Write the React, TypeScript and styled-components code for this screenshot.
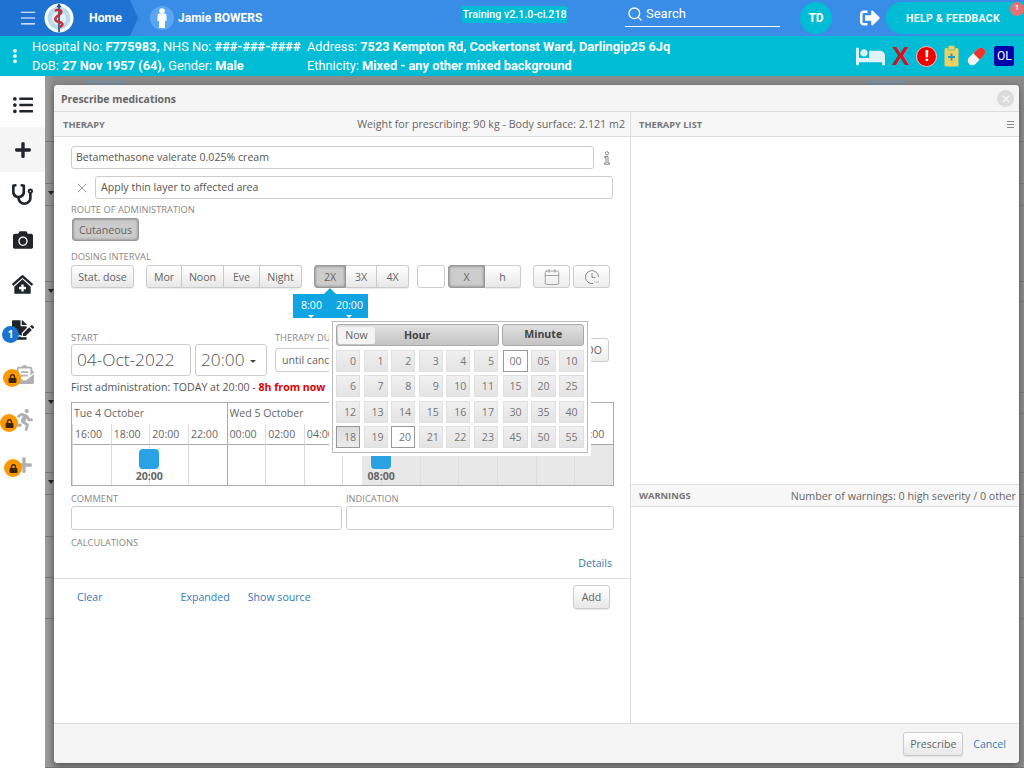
import React from 'react';
import styled, { createGlobalStyle } from 'styled-components';
import {
  FaBed,
  FaCamera,
  FaClinicMedical,
  FaEnvelopeOpenText,
  FaFileSignature,
  FaListUl,
  FaLock,
  FaPlus,
  FaRunning,
  FaSignOutAlt,
  FaStethoscope,
} from 'react-icons/fa';
import { Search, X, Menu, EllipsisVertical, Calendar } from 'lucide-react';

const GlobalStyle = createGlobalStyle`
  html, body { margin: 0; padding: 0; height: 100%; overflow: hidden; }
  body { font-family: "Open Sans", "Liberation Sans", sans-serif; font-size: 11px; color: #555; }
  #root { height: 100%; }
  * { box-sizing: border-box; }
`;

const hours = Array.from({ length: 24 }, (_, i) => i);
const minutes = ['00', '05', '10', '15', '20', '25', '30', '35', '40', '45', '50', '55'];
const ticks = ['16:00', '18:00', '20:00', '22:00', '00:00', '02:00', '04:00', '06:00', '08:00', '10:00', '12:00', '14:00', '16:00', '18:00'];
const backRows = [57, 42, 22, 76, 20, 91, 21, 59, 22, 42, 41, 41, 149];

const Logo = () => (
  <svg width="30" height="30" viewBox="0 0 30 30">
    <circle cx="15" cy="15" r="14.5" fill="#fff" />
    <circle cx="15" cy="15" r="11.5" fill="#b9dcec" />
    <circle cx="15" cy="15" r="7" fill="#e3f1f7" />
    <path d="M15 1v28" stroke="#27496d" strokeWidth="1.6" />
    <path d="M11 8c5-3 9 1 4 4s-5 6 0 7 4 4 0 5" fill="none" stroke="#c8323c" strokeWidth="2.6" />
    <path d="M13 4l2-2 2 2" fill="none" stroke="#27496d" strokeWidth="1.4" />
  </svg>
);

const Person = () => (
  <svg width="12" height="20" viewBox="0 0 12 20">
    <circle cx="6" cy="3" r="2.8" fill="#fff" />
    <path d="M1.5 7a2 2 0 0 1 2-1.5h5A2 2 0 0 1 10.500 7v6H9v7H3v-7H1.500z" fill="#fff" />
  </svg>
);

const Clipboard = () => (
  <svg width="15" height="22" viewBox="0 0 15 22">
    <rect x="0.500" y="3" width="14" height="18.500" rx="1.500" fill="#f0cf63" />
    <rect x="4" y="0.500" width="7" height="4.500" rx="1" fill="#f0cf63" stroke="#00bcd4" strokeWidth="0.600" />
    <path d="M7.500 8.500v7M4 12h7" stroke="#1f9fc4" strokeWidth="2" />
  </svg>
);

const Pill = () => (
  <svg width="21" height="21" viewBox="0 0 21 21">
    <g transform="rotate(-45 10.500 10.500)">
      <rect x="0" y="6" width="21" height="9" rx="4.500" fill="#f4f4f4" />
      <path d="M10.500 6h6a4.500 4.500 0 0 1 0 9h-6z" fill="#e8342c" />
    </g>
  </svg>
);

const HistoryClock = () => (
  <svg width="16" height="16" viewBox="0 0 16 16" fill="none" stroke="#888" strokeWidth="1">
    <path d="M9 14.500A6.500 6.500 0 1 1 14.500 8" />
    <path d="M8 4v4.500h3.500" />
    <path d="M10.500 13h.8M12.500 13h.8M14.200 13h.8" />
  </svg>
);

const InfoGlyph = () => (
  <svg width="8" height="14" viewBox="0 0 8 14" fill="none" stroke="#888" strokeWidth="1">
    <circle cx="4" cy="2.300" r="1.600" />
    <path d="M1.500 5.500h3.500v6.500h1.500v1.200H1.500V12H3V6.700H1.500z" />
  </svg>
);

const App: React.FC = () => (
  <Page>
    <GlobalStyle />
    <TopBar>
      <HomeCrumb>
        <MenuButton>
          <Menu size={20} strokeWidth={1.3} />
        </MenuButton>
        <LogoSlot>
          <Logo />
        </LogoSlot>
        <HomeLabel>Home</HomeLabel>
      </HomeCrumb>
      <PatientAvatar>
        <Person />
      </PatientAvatar>
      <PatientName>Jamie BOWERS</PatientName>
      <VersionTag>Training v2.1.0-ci.218</VersionTag>
      <SearchBox>
        <Search size={16} strokeWidth={2} />
        <span>Search</span>
      </SearchBox>
      <UserCircle>TD</UserCircle>
      <ExitSlot>
        <FaSignOutAlt size={20} />
      </ExitSlot>
      <HelpPill>
        HELP &amp; FEEDBACK
        <HelpBadge>1</HelpBadge>
      </HelpPill>
    </TopBar>

    <InfoBar>
      <DotsSlot>
        <EllipsisVertical size={18} strokeWidth={3} />
      </DotsSlot>
      <InfoColumn $width={275}>
        <div>
          Hospital No: <b>F775983,</b> NHS No: <b>###-###-####</b>
        </div>
        <div>
          DoB: <b>27 Nov 1957 (64),</b> Gender: <b>Male</b>
        </div>
      </InfoColumn>
      <InfoColumn $width={520}>
        <div>
          Address: <b>7523 Kempton Rd, Cockertonst Ward, Darlingip25 6Jq</b>
        </div>
        <div>
          Ethnicity: <b>Mixed - any other mixed background</b>
        </div>
      </InfoColumn>
      <StatusIcons>
        <FaBed size={29} color="#dff3f8" />
        <RedCross>X</RedCross>
        <AlertDot>!</AlertDot>
        <Clipboard />
        <Pill />
        <OlBox>OL</OlBox>
      </StatusIcons>
    </InfoBar>

    <Main>
      <SideNav>
        <NavItem>
          <FaListUl size={20} />
        </NavItem>
        <NavItem $active>
          <FaPlus size={18} />
        </NavItem>
        <NavItem>
          <FaStethoscope size={21} />
        </NavItem>
        <NavItem>
          <FaCamera size={20} />
        </NavItem>
        <NavItem>
          <FaClinicMedical size={21} />
        </NavItem>
        <NavItem>
          <FaFileSignature size={22} />
          <CountBadge>1</CountBadge>
        </NavItem>
        <NavItem $locked>
          <FaEnvelopeOpenText size={19} />
          <LockBadge $left={3}>
            <FaLock size={9} />
          </LockBadge>
        </NavItem>
        <NavItem $locked>
          <FaRunning size={22} />
          <LockBadge $left={0}>
            <FaLock size={9} />
          </LockBadge>
        </NavItem>
        <NavItem $locked>
          <FaPlus size={18} />
          <LockBadge $left={4}>
            <FaLock size={9} />
          </LockBadge>
        </NavItem>
      </SideNav>

      <Backdrop>
        <BackTabs>
          <BackTab />
          <BackTab />
        </BackTabs>
        {backRows.map((h, i) => (
          <BackRow key={i} style={{ height: h }} $caret={i === 1 || i === 3 || i === 5 || i === 7} />
        ))}
      </Backdrop>

      <Modal>
        <ModalHeader>
          Prescribe medications
          <CloseCircle>
            <X size={12} strokeWidth={3} />
          </CloseCircle>
        </ModalHeader>

        <ModalBody>
          <LeftPane>
            <PaneHeader>
              <PaneTitle>THERAPY</PaneTitle>
              <span>Weight for prescribing: 90 kg - Body surface: 2.121 m2</span>
            </PaneHeader>
            <Form>
              <FieldRow>
                <TextField $width={523}>Betamethasone valerate 0.025% cream</TextField>
                <InfoSlot>
                  <InfoGlyph />
                </InfoSlot>
              </FieldRow>
              <FieldRow $top={7}>
                <ClearSlot>
                  <X size={16} strokeWidth={1.1} />
                </ClearSlot>
                <TextField $width={518} $indent={5}>
                  Apply thin layer to affected area
                </TextField>
              </FieldRow>

              <FieldLabel $top={5}>ROUTE OF ADMINISTRATION</FieldLabel>
              <CutaneousRow>
                <Btn $active $width={67} $left={1}>
                  Cutaneous
                </Btn>
              </CutaneousRow>

              <FieldLabel $top={10}>DOSING INTERVAL</FieldLabel>
              <DoseRow>
                <Btn $width={63}>Stat. dose</Btn>
                <BtnGroup $left={12}>
                  <Btn $width={36}>Mor</Btn>
                  <Btn $width={42}>Noon</Btn>
                  <Btn $width={36}>Eve</Btn>
                  <Btn $width={42}>Night</Btn>
                </BtnGroup>
                <BtnGroup $left={12}>
                  <Btn $active $width={32}>
                    2X
                  </Btn>
                  <Btn $width={31}>3X</Btn>
                  <Btn $width={32}>4X</Btn>
                </BtnGroup>
                <BlankField />
                <BtnGroup $left={3}>
                  <Btn $active $width={37}>
                    X
                  </Btn>
                  <Btn $width={36}>h</Btn>
                </BtnGroup>
                <IconBtn $left={12}>
                  <Calendar size={18} strokeWidth={1} color="#888" />
                </IconBtn>
                <IconBtn $left={3}>
                  <HistoryClock />
                </IconBtn>
                <TimesPopover>
                  <TimeChip>8:00</TimeChip>
                  <TimeChip>20:00</TimeChip>
                </TimesPopover>
              </DoseRow>

              <StartRow>
                <StartColumn>
                  <FieldLabel>START</FieldLabel>
                  <BigRow>
                    <BigField $width={120}>04-Oct-2022</BigField>
                    <BigField $width={72}>
                      20:00
                      <Caret />
                    </BigField>
                  </BigRow>
                </StartColumn>
                <DurationColumn>
                  <FieldLabel>THERAPY DURATION</FieldLabel>
                  <DurationField>until cancellation</DurationField>
                </DurationColumn>
                <TodoButton>TODO</TodoButton>
              </StartRow>

              <FirstDose>
                First administration: TODAY at 20:00 - <strong>8h from now</strong>
              </FirstDose>

              <Timeline>
                <DayCell $span={4}>Tue 4 October</DayCell>
                <DayCell $span={10} $divider>
                  Wed 5 October
                </DayCell>
                {ticks.map((t, i) => (
                  <TickCell key={i} $divider={i === 4}>
                    {t}
                  </TickCell>
                ))}
                {ticks.map((_, i) => (
                  <SlotCell key={i} $divider={i === 4} $shade={i > 7 ? 'full' : i === 7 ? 'half' : 'none'}>
                    {i === 2 && (
                      <Dose>
                        <DoseMark />
                        20:00
                      </Dose>
                    )}
                    {i === 8 && (
                      <Dose>
                        <DoseMark />
                        08:00
                      </Dose>
                    )}
                  </SlotCell>
                ))}
              </Timeline>

              <TwoColumns>
                <div>
                  <FieldLabel>COMMENT</FieldLabel>
                  <EmptyField />
                </div>
                <div>
                  <FieldLabel>INDICATION</FieldLabel>
                  <EmptyField />
                </div>
              </TwoColumns>

              <FieldLabel $top={7}>CALCULATIONS</FieldLabel>
              <DetailsRow>
                <TextLink>Details</TextLink>
              </DetailsRow>

              <ClockPopover>
                <ClockHead>
                  <HourHead>
                    <NowBtn>Now</NowBtn>
                    <HeadTitle>Hour</HeadTitle>
                  </HourHead>
                  <MinuteHead>Minute</MinuteHead>
                </ClockHead>
                <ClockGrids>
                  <HourGrid>
                    {hours.map((h) => (
                      <ClockCell key={h} $align="right" $state={h === 18 ? 'now' : h === 20 ? 'picked' : 'idle'}>
                        {h}
                      </ClockCell>
                    ))}
                  </HourGrid>
                  <MinuteGrid>
                    {minutes.map((m) => (
                      <ClockCell key={m} $align="center" $state={m === '00' ? 'picked' : 'idle'}>
                        {m}
                      </ClockCell>
                    ))}
                  </MinuteGrid>
                </ClockGrids>
              </ClockPopover>
            </Form>
            <ActionBar>
              <TextLink>Clear</TextLink>
              <TextLink $left={78}>Expanded</TextLink>
              <TextLink $left={18}>Show source</TextLink>
              <ActionEnd>
                <Btn $width={37} $height={24}>
                  Add
                </Btn>
              </ActionEnd>
            </ActionBar>
          </LeftPane>

          <RightPane>
            <ListHeader>
              <PaneTitle>THERAPY LIST</PaneTitle>
              <ListMenu>
                <i />
                <i />
                <i />
              </ListMenu>
            </ListHeader>
            <ListArea />
            <WarningsHeader>
              <PaneTitle>WARNINGS</PaneTitle>
              <span>Number of warnings: 0 high severity / 0 other</span>
            </WarningsHeader>
            <WarningArea />
          </RightPane>
        </ModalBody>

        <ModalFooter>
          <Btn $width={60} $height={24}>
            Prescribe
          </Btn>
          <TextLink $left={10}>Cancel</TextLink>
        </ModalFooter>
      </Modal>
    </Main>
  </Page>
);

const Page = styled.div`
  width: 1024px;
  height: 768px;
  display: flex;
  flex-direction: column;
  overflow: hidden;
  background: #8f8f8f;
`;

const TopBar = styled.header`
  height: 36px;
  flex: none;
  display: flex;
  align-items: center;
  background: #3a8de6;
  color: #fff;
  font-family: Roboto, "Liberation Sans", sans-serif;
`;

const HomeCrumb = styled.div`
  width: 138px;
  height: 36px;
  display: flex;
  align-items: center;
  background: #1e72d2;
  clip-path: polygon(0 0, 130px 0, 138px 18px, 130px 36px, 0 36px);
`;

const MenuButton = styled.div`
  width: 44px;
  padding-left: 18px;
  display: flex;
`;

const LogoSlot = styled.div`
  width: 45px;
  display: flex;
`;

const HomeLabel = styled.div`
  font-size: 12.300px;
  font-weight: 700;
`;

const PatientAvatar = styled.div`
  width: 24px;
  height: 24px;
  margin-left: 12px;
  border-radius: 50%;
  background: #5aa6f2;
  display: flex;
  align-items: center;
  justify-content: center;
`;

const PatientName = styled.div`
  width: 284px;
  margin-left: 4px;
  font-size: 12px;
  font-weight: 700;
`;

const VersionTag = styled.div`
  width: 105px;
  height: 17px;
  margin-bottom: 8px;
  background: #00bcd4;
  font-size: 10.700px;
  font-weight: 500;
  line-height: 17px;
  text-align: center;
  white-space: nowrap;
`;

const SearchBox = styled.div`
  width: 155px;
  height: 24px;
  margin: 0 0 6px 58px;
  display: flex;
  align-items: center;
  gap: 3px;
  padding: 0 0 2px 2px;
  border-bottom: 1px solid #fff;
  font-size: 13px;
`;

const UserCircle = styled.div`
  width: 32px;
  height: 32px;
  margin-left: 20px;
  border-radius: 50%;
  background: #00bcd4;
  font-size: 12px;
  font-weight: 700;
  line-height: 32px;
  text-align: center;
`;

const ExitSlot = styled.div`
  width: 54px;
  padding-left: 28px;
  display: flex;
`;

const HelpPill = styled.div`
  position: relative;
  width: 138px;
  height: 32px;
  border-radius: 16px 0 0 16px;
  background: #00bcd4;
  font-size: 10.500px;
  font-weight: 700;
  letter-spacing: 0.300px;
  line-height: 33px;
  padding-left: 20px;
  white-space: nowrap;
`;

const HelpBadge = styled.span`
  position: absolute;
  top: 0;
  right: 0;
  width: 14px;
  height: 14px;
  border-radius: 50%;
  background: #e57373;
  font-size: 7px;
  letter-spacing: 0;
  line-height: 12px;
  text-align: center;
`;

const InfoBar = styled.div`
  height: 40px;
  flex: none;
  display: flex;
  align-items: center;
  background: #00bcd4;
  color: #fff;
  font-family: Roboto, "Liberation Sans", sans-serif;
  font-size: 12.800px;
  line-height: 19px;

  b {
    font-weight: 700;
  }
`;

const DotsSlot = styled.div`
  width: 32px;
  padding-left: 6px;
  display: flex;
`;

const InfoColumn = styled.div<{ $width: number }>`
  width: ${({ $width }) => $width}px;
  white-space: nowrap;
`;

const StatusIcons = styled.div`
  display: flex;
  align-items: center;
  gap: 7px;
  margin-left: 29px;
  height: 28px;
`;

const RedCross = styled.span`
  font-family: "Liberation Sans", sans-serif;
  font-size: 26px;
  font-weight: 700;
  color: #d2141c;
  line-height: 28px;
`;

const AlertDot = styled.span`
  width: 21px;
  height: 21px;
  border-radius: 50%;
  background: #ee0000;
  border: 1px solid #f5c6c6;
  font-size: 15px;
  font-weight: 900;
  line-height: 19px;
  text-align: center;
`;

const OlBox = styled.span`
  width: 20px;
  height: 20px;
  border-radius: 2px;
  background: #0000a8;
  font-size: 12px;
  line-height: 20px;
  text-align: center;
`;

const Main = styled.main`
  position: relative;
  flex: 1;
  display: flex;
  min-height: 0;
`;

const SideNav = styled.nav`
  width: 45px;
  flex: none;
  padding-top: 6px;
  background: #fff;
  display: flex;
  flex-direction: column;
`;

const NavItem = styled.div<{ $active?: boolean; $locked?: boolean }>`
  position: relative;
  height: 45px;
  flex: none;
  display: flex;
  align-items: center;
  justify-content: center;
  background: ${({ $active }) => ($active ? '#f5f5f5' : 'transparent')};
  color: ${({ $locked }) => ($locked ? '#b0b0b0' : '#1f252b')};
  padding-left: ${({ $locked }) => ($locked ? '3px' : '0')};
`;

const CountBadge = styled.span`
  position: absolute;
  left: 2px;
  top: 19px;
  width: 17px;
  height: 17px;
  border-radius: 50%;
  background: #1a73d0;
  color: #fff;
  font-size: 10px;
  font-weight: 700;
  line-height: 17px;
  text-align: center;
`;

const LockBadge = styled.span<{ $left: number }>`
  position: absolute;
  left: ${({ $left }) => $left}px;
  top: 17px;
  width: 18px;
  height: 18px;
  border-radius: 50%;
  background: #ff9800;
  color: #3a2500;
  display: flex;
  align-items: center;
  justify-content: center;
`;

const Backdrop = styled.div`
  flex: 1;
  min-width: 0;
  background: linear-gradient(90deg, #9c9c9c, #8a8a8a 9px);
  overflow: hidden;
`;

const BackTabs = styled.div`
  height: 9px;
  display: flex;
  justify-content: space-between;
  padding: 4px 119px 0 40px;
`;

const BackTab = styled.div`
  width: 40px;
  height: 5px;
  background: #7e8c99;
`;

const BackRow = styled.div<{ $caret?: boolean }>`
  position: relative;
  border-bottom: 1px solid #777;

  &::after {
    content: '';
    display: ${({ $caret }) => ($caret ? 'block' : 'none')};
    position: absolute;
    left: 3px;
    bottom: -15px;
    border: 3px solid transparent;
    border-top: 4px solid #222;
  }
`;

const Modal = styled.section`
  position: absolute;
  left: 54px;
  top: 9px;
  width: 965px;
  height: 678px;
  display: flex;
  flex-direction: column;
  background: #fff;
  border-radius: 4px;
  overflow: hidden;
  box-shadow: 0 2px 6px rgba(0, 0, 0, 0.4);
`;

const ModalHeader = styled.div`
  height: 27px;
  flex: none;
  display: flex;
  align-items: center;
  justify-content: space-between;
  padding: 1px 5px 0 7px;
  background: #f5f5f5;
  border-bottom: 1px solid #ddd;
  color: #666;
  font-size: 10.400px;
  font-weight: 700;
`;

const CloseCircle = styled.div`
  width: 17px;
  height: 17px;
  border-radius: 50%;
  background: #dcdcdc;
  color: #f5f5f5;
  display: flex;
  align-items: center;
  justify-content: center;
`;

const ModalBody = styled.div`
  flex: 1;
  min-height: 0;
  display: flex;
`;

const LeftPane = styled.div`
  width: 577px;
  flex: none;
  border-right: 1px solid #ddd;
  display: flex;
  flex-direction: column;
`;

const RightPane = styled.div`
  flex: 1;
  display: flex;
  flex-direction: column;
`;

const PaneHeader = styled.div`
  height: 25px;
  flex: none;
  display: flex;
  align-items: center;
  justify-content: space-between;
  padding: 0 5px 0 9px;
  background: #f7f7f7;
  border-bottom: 1px solid #ddd;
  color: #666;
  font-size: 10.700px;
`;

const ListHeader = styled(PaneHeader)`
  padding-left: 8px;
`;

const PaneTitle = styled.span`
  font-size: 9.300px;
  font-weight: 700;
  color: #777;
`;

const ListMenu = styled.div`
  width: 7px;
  display: flex;
  flex-direction: column;
  gap: 2px;

  i {
    display: block;
    height: 1px;
    background: #888;
  }
`;

const ListArea = styled.div`
  height: 347px;
  flex: none;
`;

const WarningsHeader = styled(PaneHeader)`
  height: 23px;
  padding: 0 3px 0 8px;
  border-top: 1px solid #ddd;
`;

const WarningArea = styled.div`
  flex: 1;
`;

const Form = styled.div`
  position: relative;
  flex: none;
  padding: 9px 16px 0 17px;
`;

const FieldRow = styled.div<{ $top?: number }>`
  display: flex;
  align-items: center;
  margin-top: ${({ $top }) => $top ?? 0}px;
`;

const TextField = styled.div<{ $width: number; $indent?: number }>`
  width: ${({ $width }) => $width}px;
  height: 23px;
  flex: none;
  padding: 0 ${({ $indent }) => $indent ?? 4}px;
  background: #fff;
  border: 1px solid #ccc;
  border-radius: 3px;
  color: #555;
  font-size: 10.600px;
  line-height: 21px;
`;

const InfoSlot = styled.div`
  margin-left: 9px;
  display: flex;
`;

const ClearSlot = styled.div`
  width: 24px;
  flex: none;
  display: flex;
  padding-left: 3px;
  color: #888;
`;

const FieldLabel = styled.div<{ $top?: number }>`
  height: 12px;
  margin-top: ${({ $top }) => $top ?? 0}px;
  color: #888;
  font-size: 9.300px;
  line-height: 12px;
  white-space: nowrap;
  overflow: hidden;
`;

const CutaneousRow = styled.div`
  display: flex;
  margin-top: 2px;
`;

const Btn = styled.div<{ $width: number; $height?: number; $left?: number; $active?: boolean }>`
  width: ${({ $width }) => $width}px;
  height: ${({ $height }) => $height ?? 23}px;
  flex: none;
  margin-left: ${({ $left }) => $left ?? 0}px;
  border: 1px solid ${({ $active }) => ($active ? '#999' : '#ccc')};
  border-radius: 3px;
  background: ${({ $active }) => ($active ? '#ccc' : 'linear-gradient(#fff, #e8e8e8)')};
  box-shadow: ${({ $active }) => ($active ? 'inset 0 0 3px rgba(0,0,0,.45)' : '0 1px 1px rgba(0,0,0,.08)')};
  color: #666;
  font-size: 10.600px;
  line-height: 22px;
  text-align: center;
  white-space: nowrap;
`;

const BtnGroup = styled.div<{ $left?: number }>`
  display: flex;
  margin-left: ${({ $left }) => $left ?? 0}px;

  & > * {
    border-radius: 0;
    border-left-width: 0;
  }

  & > *:first-child {
    border-radius: 3px 0 0 3px;
    border-left-width: 1px;
  }

  & > *:last-child {
    border-radius: 0 3px 3px 0;
  }
`;

const DoseRow = styled.div`
  position: relative;
  display: flex;
  height: 23px;
  margin-top: 2px;
`;

const BlankField = styled.div`
  width: 28px;
  height: 23px;
  margin-left: 8px;
  background: #fff;
  border: 1px solid #ccc;
  border-radius: 3px;
`;

const IconBtn = styled.div<{ $left: number }>`
  width: 37px;
  height: 23px;
  margin-left: ${({ $left }) => $left}px;
  border: 1px solid #ccc;
  border-radius: 3px;
  background: linear-gradient(#fff, #ededed);
  display: flex;
  align-items: center;
  justify-content: center;
`;

const TimesPopover = styled.div`
  position: absolute;
  left: 222px;
  top: 29px;
  width: 75px;
  height: 24px;
  display: flex;
  gap: 14px;
  padding-left: 8px;
  background: #0fa5e3;

  &::before {
    content: '';
    position: absolute;
    left: 31px;
    top: -6px;
    border: 6px solid transparent;
    border-top: 0;
    border-bottom: 6px solid #0fa5e3;
  }
`;

const TimeChip = styled.span`
  position: relative;
  color: #fff;
  font-size: 10.600px;
  line-height: 22px;

  &::after {
    content: '';
    position: absolute;
    left: 50%;
    bottom: 0;
    margin-left: -3px;
    border: 3px solid transparent;
    border-bottom: 0;
    border-top: 3px solid #fff;
  }
`;

const StartRow = styled.div`
  display: flex;
  height: 48px;
  margin-top: 44px;
`;

const StartColumn = styled.div`
  width: 204px;
  flex: none;
`;

const BigRow = styled.div`
  display: flex;
  gap: 4px;
`;

const BigField = styled.div<{ $width: number }>`
  width: ${({ $width }) => $width}px;
  height: 32px;
  flex: none;
  padding-left: 5px;
  background: #fff;
  border: 1px solid #ccc;
  border-radius: 3px;
  color: #555;
  font-size: 17.300px;
  font-weight: 300;
  line-height: 30px;
  white-space: nowrap;
`;

const Caret = styled.i`
  display: inline-block;
  margin: 0 0 3px 5px;
  border: 3px solid transparent;
  border-bottom: 0;
  border-top: 3px solid #444;
`;

const DurationColumn = styled.div`
  width: 100px;
  flex: none;
`;

const DurationField = styled.div`
  width: 100px;
  height: 24px;
  margin-top: 4px;
  padding-left: 6px;
  border: 1px solid #ccc;
  border-radius: 3px;
  color: #666;
  font-size: 10.600px;
  line-height: 22px;
  white-space: nowrap;
  overflow: hidden;
`;

const TodoButton = styled.div`
  width: 44px;
  height: 24px;
  margin: 6px 5px 0 auto;
  border: 1px solid #ccc;
  border-radius: 3px;
  background: linear-gradient(#fff, #eee);
  color: #666;
  font-size: 10.600px;
  line-height: 22px;
  text-align: center;
`;

const FirstDose = styled.div`
  height: 16px;
  margin-top: -1px;
  color: #555;
  font-size: 10.600px;
  line-height: 16px;

  strong {
    color: #e00000;
    font-weight: 700;
  }
`;

const Timeline = styled.div`
  display: grid;
  grid-template-columns: repeat(14, 1fr);
  grid-template-rows: 21px 21px 40px;
  width: 543px;
  margin-top: 7px;
  border: 1px solid #aaa;
  color: #666;
  font-size: 10.600px;
`;

const DayCell = styled.div<{ $span: number; $divider?: boolean }>`
  grid-column: span ${({ $span }) => $span};
  padding: 1px 0 0 2px;
  border-left: ${({ $divider }) => ($divider ? '1px solid #aaa' : '0')};
  line-height: 18px;
`;

const TickCell = styled.div<{ $divider: boolean }>`
  padding-left: 2px;
  border-left: 1px solid ${({ $divider }) => ($divider ? '#aaa' : '#ddd')};
  border-bottom: 1px solid #aaa;
  line-height: 20px;
  white-space: nowrap;
  overflow: hidden;
`;

const SlotCell = styled.div<{ $divider: boolean; $shade: 'none' | 'half' | 'full' }>`
  position: relative;
  border-left: 1px solid ${({ $divider }) => ($divider ? '#aaa' : '#ddd')};
  background: ${({ $shade }) =>
    $shade === 'full' ? '#e8e8e8' : $shade === 'half' ? 'linear-gradient(90deg, transparent 50%, #e8e8e8 50%)' : 'transparent'};
`;

const Dose = styled.div`
  position: absolute;
  left: -21px;
  top: 4px;
  width: 40px;
  display: flex;
  flex-direction: column;
  align-items: center;
  color: #666;
  font-size: 10.600px;
  font-weight: 700;
  line-height: 13px;
`;

const DoseMark = styled.div`
  width: 20px;
  height: 20px;
  margin-bottom: 1px;
  border-radius: 4px;
  background: #29a3e3;
`;

const TwoColumns = styled.div`
  display: grid;
  grid-template-columns: 271px 268px;
  gap: 4px;
  margin-top: 7px;
`;

const EmptyField = styled.div`
  height: 24px;
  margin-top: 1px;
  border: 1px solid #ccc;
  border-radius: 3px;
  background: #fff;
`;

const DetailsRow = styled.div`
  display: flex;
  justify-content: flex-end;
  margin-top: 6px;
  padding-right: 2px;
  height: 16px;
  line-height: 16px;
`;

const TextLink = styled.span<{ $left?: number }>`
  margin-left: ${({ $left }) => $left ?? 0}px;
  color: #337ab7;
  font-size: 10.600px;
`;

const ClockPopover = styled.div`
  position: absolute;
  left: 278px;
  top: 184px;
  width: 256px;
  height: 132px;
  padding: 2px 3px;
  background: #fff;
  border: 1px solid #bbb;
  box-shadow: 0 0 0 3px #fff;
`;

const ClockHead = styled.div`
  display: flex;
  gap: 3px;
  height: 22px;
`;

const HourHead = styled.div`
  width: 164px;
  display: flex;
  align-items: center;
  padding-left: 1px;
  border: 1px solid #aaa;
  border-radius: 3px;
  background: linear-gradient(#e0e0e0, #c4c4c4);
`;

const NowBtn = styled.div`
  width: 37px;
  height: 17px;
  border-radius: 2px;
  background: #f4f4f4;
  color: #666;
  font-size: 10.600px;
  line-height: 16px;
  text-align: center;
`;

const HeadTitle = styled.div`
  flex: 1;
  padding-right: 39px;
  color: #444;
  font-size: 10.600px;
  font-weight: 700;
  line-height: 18px;
  text-align: center;
`;

const MinuteHead = styled.div`
  width: 82px;
  border: 1px solid #aaa;
  border-radius: 3px;
  background: linear-gradient(#e0e0e0, #c4c4c4);
  color: #444;
  font-size: 10.600px;
  font-weight: 700;
  line-height: 19px;
  text-align: center;
`;

const ClockGrids = styled.div`
  display: flex;
  gap: 5px;
  margin-top: 4px;
`;

const HourGrid = styled.div`
  width: 162px;
  display: grid;
  grid-template-columns: repeat(6, 24px);
  grid-auto-rows: 22px;
  justify-content: space-between;
  row-gap: 3.300px;
`;

const MinuteGrid = styled.div`
  width: 81px;
  display: grid;
  grid-template-columns: repeat(3, 25px);
  grid-auto-rows: 22px;
  justify-content: space-between;
  row-gap: 3.300px;
`;

const ClockCell = styled.div<{ $align: 'right' | 'center'; $state: 'idle' | 'now' | 'picked' }>`
  padding: 0 ${({ $align }) => ($align === 'right' ? '3px' : '0')};
  border: 1px solid ${({ $state }) => ($state === 'idle' ? '#e0e0e0' : '#999')};
  background: ${({ $state }) =>
    $state === 'picked' ? '#fff' : $state === 'now' ? 'linear-gradient(#dcdcdc, #ececec)' : 'linear-gradient(#f0f0f0, #e4e4e4)'};
  color: #777;
  font-size: 10.600px;
  line-height: 20px;
  text-align: ${({ $align }) => $align};
`;

const ActionBar = styled.div`
  height: 37px;
  flex: none;
  margin-top: 7px;
  display: flex;
  align-items: center;
  padding: 0 20px 0 23px;
  border-top: 1px solid #ddd;
`;

const ActionEnd = styled.div`
  margin-left: auto;
`;

const ModalFooter = styled.div`
  height: 40px;
  flex: none;
  display: flex;
  align-items: center;
  justify-content: flex-end;
  padding: 0 13px 0 0;
  background: #f5f5f5;
  border-top: 1px solid #ddd;
`;

export default App;
